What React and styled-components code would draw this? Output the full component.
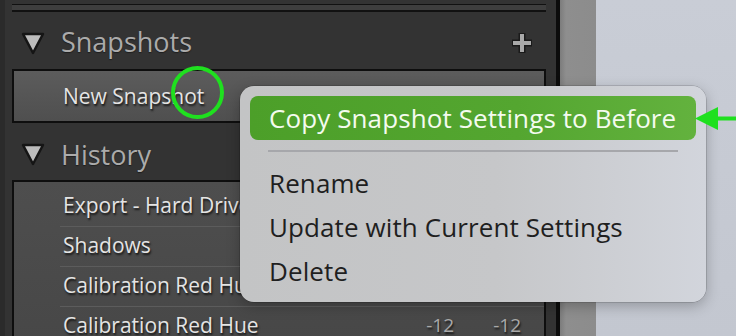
import styled, { createGlobalStyle } from "styled-components"

const Global = createGlobalStyle`
	html, body {
		margin: 0;
		padding: 0;
		width: 736px;
		height: 336px;
		overflow: hidden;
		background: #c6cad3;
	}
`

const Screen = styled.div`
	position: relative;
	display: flex;
	width: 736px;
	height: 336px;
	overflow: hidden;
	font-family: "Open Sans", "DejaVu Sans", sans-serif;
`

const Panel = styled.div`
	width: 534px;
	flex: none;
	display: flex;
	flex-direction: column;
	background: #333333;
	border-left: 5px solid #2b2b2b;
	border-right: 4px solid #0c0c0c;
	padding: 0 10px 0 7px;
`

const Strip = styled.div`
	width: 36px;
	flex: none;
	background: linear-gradient(90deg, #7c7c7c 0, #8e8e8e 6px, #8c8c8c 100%);
`

const Backdrop = styled.div`
	flex: 1;
	background: linear-gradient(180deg, #c9cdd6 0%, #c3c7d0 100%);
`

const TopBox = styled.div`
	flex: none;
	margin-top: 4px;
	height: 5px;
	background: #3e3e3e;
	border-top: 1px solid #111;
	border-bottom: 2px solid #111;
`

const Header = styled.div`
	flex: none;
	height: 57px;
	display: flex;
	align-items: center;
	padding: 4px 12px 0 9px;
	box-sizing: border-box;
	color: #ababab;
	font-size: 27px;
	text-shadow: 0 1px 1px #1e1e1e;
`

const Title = styled.span`
	margin-left: 16px;
	flex: 1;
	line-height: 1;
	margin-top: ${(p) => (p.$low ? "2px" : "-2px")};
`

const Box = styled.div`
	border: 2px solid #0e0e0e;
	background: ${(p) => (p.$active ? "linear-gradient(180deg, #5c5c5c 0%, #4f4f4f 100%)" : "linear-gradient(180deg, #4e4e4e 0%, #474747 100%)")};
	height: ${(p) => (p.$fill ? "auto" : "50px")};
	flex: ${(p) => (p.$fill ? "1 0 auto" : "none")};
	padding-top: ${(p) => (p.$fill ? "5px" : 0)};
	display: flex;
	flex-direction: column;
	justify-content: ${(p) => (p.$fill ? "flex-start" : "center")};
`

const ItemText = styled.span`
	font-size: 21px;
	color: #e4e4e4;
	text-shadow: 1px 2px 2px #161616;
	line-height: 1;
`

const SnapRow = styled.div`
	padding-left: 49px;
	display: flex;
	align-items: center;
`

const HistRow = styled.div`
	flex: none;
	box-sizing: border-box;
	height: 40px;
	margin-left: 46px;
	padding: 0 23px 3px 3px;
	display: flex;
	align-items: center;
	border-bottom: 1px solid #5c5c5c;
`

const Value = styled.span`
	width: ${(p) => p.$w}px;
	text-align: right;
	font-size: 19px;
	color: #a9a9a9;
	text-shadow: 1px 2px 2px #161616;
	font-family: "Liberation Sans Narrow", "Open Sans", sans-serif;
`

const Menu = styled.div`
	position: absolute;
	left: 240px;
	top: 86px;
	width: 466px;
	box-sizing: border-box;
	padding: 10px 10px 9px;
	border-radius: 14px;
	background: linear-gradient(90deg, #c3c4c5 0%, #c6c7c9 55%, #d2d5dc 100%);
	box-shadow: 0 4px 14px rgba(0, 0, 0, 0.25), 0 0 0 0.5px rgba(0, 0, 0, 0.25);
	font-family: "Open Sans", sans-serif;
`

const MenuItem = styled.div`
	height: 44px;
	display: flex;
	align-items: center;
	padding-left: 19px;
	border-radius: 8px;
	font-size: 26px;
	letter-spacing: 0.1px;
	color: ${(p) => (p.$selected ? "#f4fbef" : "#1f1f1f")};
	background: ${(p) => (p.$selected ? "linear-gradient(90deg, #4c9f29 0%, #54a630 60%, #63b23e 100%)" : "transparent")};
`

const Divider = styled.div`
	height: 2px;
	margin: 10px 18px 9px;
	background: #a6a7ab;
`

const Ring = styled.div`
	position: absolute;
	left: 171px;
	top: 66px;
	width: 45px;
	height: 45px;
	border: 4px solid #1fe01f;
	border-radius: 50%;
`

const Pointer = styled.svg`
	position: absolute;
	left: 694px;
	top: 105px;
`

function Triangle() {
	return (
		<svg width='24' height='24' viewBox='0 0 24 24'>
			<path d='M2 3 L22 3 L12 22 Z' fill='#bcbcbc' stroke='#151515' strokeWidth='2.5' strokeLinejoin='round' />
		</svg>
	)
}

function Plus() {
	return (
		<svg width='24' height='24' viewBox='0 0 24 24'>
			<path d='M12 2 V22 M2 12 H22' stroke='#1a1a1a' strokeWidth='7' />
			<path d='M12 3 V21 M3 12 H21' stroke='#a9a9a9' strokeWidth='4' />
		</svg>
	)
}

const history = [
	{ name: "Export - Hard Drive" },
	{ name: "Shadows" },
	{ name: "Calibration Red Hue" },
	{ name: "Calibration Red Hue", a: "-12", b: "-12" },
]

export default function App() {
	return (
		<Screen>
			<Global />
			<Panel>
				<TopBox />
				<Header>
					<Triangle />
					<Title>Snapshots</Title>
					<Plus />
				</Header>
				<Box $active>
					<SnapRow>
						<ItemText>New Snapshot</ItemText>
					</SnapRow>
				</Box>
				<Header>
					<Triangle />
					<Title $low>History</Title>
				</Header>
				<Box $fill>
					{history.map((h, i) => (
						<HistRow key={i}>
							<ItemText style={{ flex: 1 }}>{h.name}</ItemText>
							{h.a && <Value $w={60}>{h.a}</Value>}
							{h.b && <Value $w={67}>{h.b}</Value>}
						</HistRow>
					))}
				</Box>
			</Panel>
			<Strip />
			<Backdrop />

			<Ring />
			<Menu>
				<MenuItem $selected>Copy Snapshot Settings to Before</MenuItem>
				<Divider />
				<MenuItem>Rename</MenuItem>
				<MenuItem>Update with Current Settings</MenuItem>
				<MenuItem>Delete</MenuItem>
			</Menu>
			<Pointer width='42' height='26' viewBox='0 0 42 26'>
				<path d='M14 13.5 H42' stroke='#1fe01f' strokeWidth='4' />
				<path d='M1 13.5 L24 2 L24 25 Z' fill='#1fe01f' />
			</Pointer>
		</Screen>
	)
}
